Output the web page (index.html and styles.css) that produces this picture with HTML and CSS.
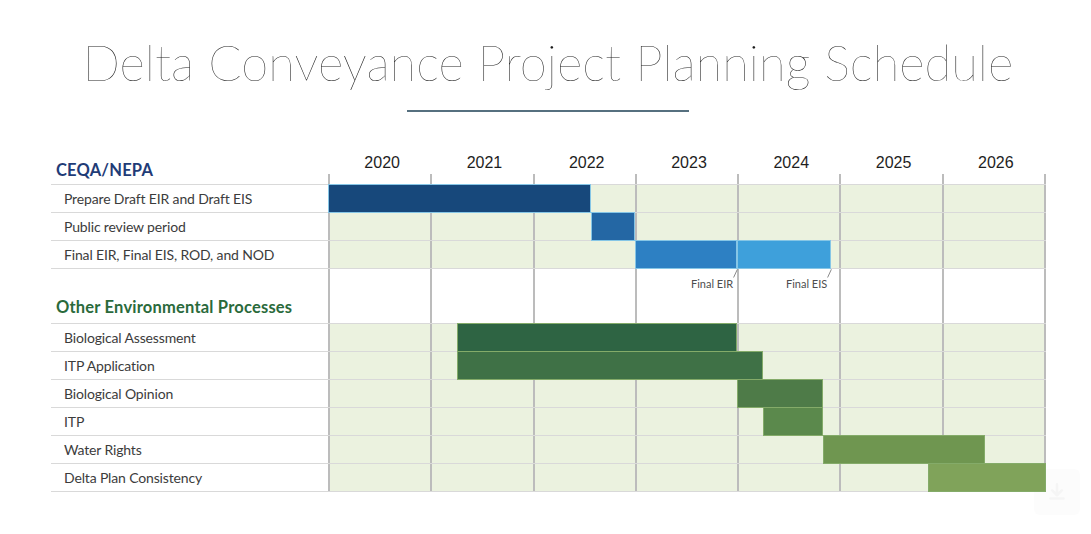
FILE: index.html
```html
<!DOCTYPE html>
<html lang="en">
<head>
<meta charset="utf-8">
<title>Delta Conveyance Project Planning Schedule</title>
<link rel="stylesheet" href="styles.css">
</head>
<body>
<div class="page">
  <div class="download" aria-hidden="true">
    <svg viewBox="0 0 24 24"><path d="M12 5v10M7.5 10.5 12 15l4.5-4.5M6 18h12"/></svg>
  </div>

  <h1 class="title">Delta Conveyance Project Planning Schedule</h1>
  <div class="rule"></div>

  <div class="gantt">
    <div class="head">
      <div class="section ceqa">CEQA/NEPA</div>
      <div class="years">
        <span>2020</span><span>2021</span><span>2022</span><span>2023</span><span>2024</span><span>2025</span><span>2026</span>
      </div>
    </div>

    <div class="row">
      <div class="label">Prepare Draft EIR and Draft EIS</div>
      <div class="track"><div class="bar b1" style="--s:0;--e:2.571"></div></div>
    </div>
    <div class="row">
      <div class="label">Public review period</div>
      <div class="track"><div class="bar b2" style="--s:2.571;--e:3.0"></div></div>
    </div>
    <div class="row">
      <div class="label">Final EIR, Final EIS, ROD, and NOD</div>
      <div class="track">
        <div class="bar b3" style="--s:3.0;--e:4.0"></div>
        <div class="bar b4" style="--s:4.0;--e:4.92"></div>
      </div>
    </div>

    <div class="gap">
      <div class="section other">Other Environmental Processes</div>
      <div class="track blank">
        <div class="note" style="--x:4.0"><span>Final EIR</span><svg viewBox="0 0 5 9"><line x1="0.6" y1="8.5" x2="4.4" y2="0.3"/></svg></div>
        <div class="note" style="--x:4.92"><span>Final EIS</span><svg viewBox="0 0 5 9"><line x1="0.6" y1="8.5" x2="4.4" y2="0.3"/></svg></div>
      </div>
    </div>

    <div class="row">
      <div class="label">Biological Assessment</div>
      <div class="track"><div class="bar g1" style="--s:1.258;--e:4.0"></div></div>
    </div>
    <div class="row">
      <div class="label">ITP Application</div>
      <div class="track"><div class="bar g2" style="--s:1.258;--e:4.256"></div></div>
    </div>
    <div class="row">
      <div class="label">Biological Opinion</div>
      <div class="track"><div class="bar g3" style="--s:4.0;--e:4.842"></div></div>
    </div>
    <div class="row">
      <div class="label">ITP</div>
      <div class="track"><div class="bar g4" style="--s:4.256;--e:4.842"></div></div>
    </div>
    <div class="row">
      <div class="label">Water Rights</div>
      <div class="track"><div class="bar g5" style="--s:4.842;--e:6.42"></div></div>
    </div>
    <div class="row last">
      <div class="label">Delta Plan Consistency</div>
      <div class="track"><div class="bar g6" style="--s:5.866;--e:7.02"></div></div>
    </div>
  </div>
</div>
</body>
</html>
```

FILE: styles.css
```css
* { box-sizing: border-box; }

body {
  margin: 0;
  background: #ffffff;
  font-family: "Lato", "Open Sans", sans-serif;
  color: #333333;
}

.page {
  position: relative;
  width: 1091px;
  height: 534px;
  overflow: hidden;
}

.title {
  margin: 0;
  padding: 33px 0 0 5px;
  font-family: "Lato", "Open Sans", sans-serif;
  font-weight: 100;
  font-size: 49px;
  line-height: 59px;
  text-align: center;
  color: #1c1c1c;
}

.rule {
  margin: 18px 0 0 407px;
  width: 282px;
  height: 2px;
  background: #56707f;
}

.gantt {
  --yr: 102.2857px;
  position: relative;
  z-index: 1;
  margin-left: 51px;
  width: 995px;
}

.head {
  display: grid;
  grid-template-columns: 277px 718px;
  height: 72px;
}

.section {
  align-self: end;
  padding-left: 5px;
  font-weight: 700;
  font-size: 16.5px;
  letter-spacing: 0.2px;
  line-height: 18px;
}

.ceqa {
  color: #1f3c77;
  padding-bottom: 5px;
}

.other {
  color: #2a6a3b;
  padding-bottom: 7px;
}

.years {
  display: flex;
  align-items: flex-end;
  background: repeating-linear-gradient(90deg, #bcbcbc 0 2px, transparent 2px var(--yr)) left bottom / 100% 10px no-repeat;
}

.years span {
  flex: 0 0 var(--yr);
  padding: 0 0 12px 6px;
  text-align: center;
  font-family: "Liberation Sans", Arial, sans-serif;
  font-size: 16px;
  line-height: 18px;
  color: #1e1e1e;
}

.row {
  display: grid;
  grid-template-columns: 277px 718px;
  height: 28px;
  border-top: 1px solid #d9d9d9;
}

.row.last {
  height: 29px;
  border-bottom: 1px solid #d9d9d9;
}

.label {
  display: flex;
  align-items: center;
  padding-left: 13px;
  font-size: 14px;
  letter-spacing: -0.15px;
  color: #3c3c3c;
  white-space: nowrap;
}

.track {
  position: relative;
  background: repeating-linear-gradient(90deg, #bcbcbc 0 2px, transparent 2px var(--yr)), #ebf2df;
}

.track.blank {
  background: repeating-linear-gradient(90deg, #bcbcbc 0 2px, transparent 2px var(--yr)), #ffffff;
}

.gap {
  display: grid;
  grid-template-columns: 277px 718px;
  height: 55px;
  border-top: 1px solid #d9d9d9;
}

.bar {
  position: absolute;
  top: -1px;
  height: 29px;
  left: calc(var(--s) * var(--yr));
  width: calc((var(--e) - var(--s)) * var(--yr));
  border: 1px solid #86c6e6;
}

.b1 { background: #17487b; }
.b2 { background: #2467a4; }
.b3 { background: #2d80c3; }
.b4 { background: #3ea0db; }

.g1, .g2, .g3, .g4, .g5, .g6 { border-color: #84ab69; }
.g1 { background: #2e6443; }
.g2 { background: #3f7146; }
.g3 { background: #4e7b48; }
.g4 { background: #5b894c; }
.g5 { background: #6f9650; }
.g6 { background: #80a35a; }

.note {
  position: absolute;
  top: 0;
  right: calc(718px - var(--x) * var(--yr) - 1px);
  display: flex;
  align-items: flex-start;
  font-size: 11px;
  line-height: 13px;
  color: #4e4e4e;
}

.note span {
  margin-top: 8px;
}

.note svg {
  width: 5px;
  height: 9px;
  stroke: #8a8a8a;
  stroke-width: 1;
  fill: none;
}

.download {
  position: absolute;
  left: 1034px;
  top: 469px;
  width: 46px;
  height: 46px;
  border-radius: 6px;
  background: #fcfcfc;
  display: flex;
  align-items: center;
  justify-content: center;
}

.download svg {
  width: 26px;
  height: 26px;
  fill: none;
  stroke: #f5f5f5;
  stroke-width: 2.4;
  stroke-linecap: round;
  stroke-linejoin: round;
}
```
